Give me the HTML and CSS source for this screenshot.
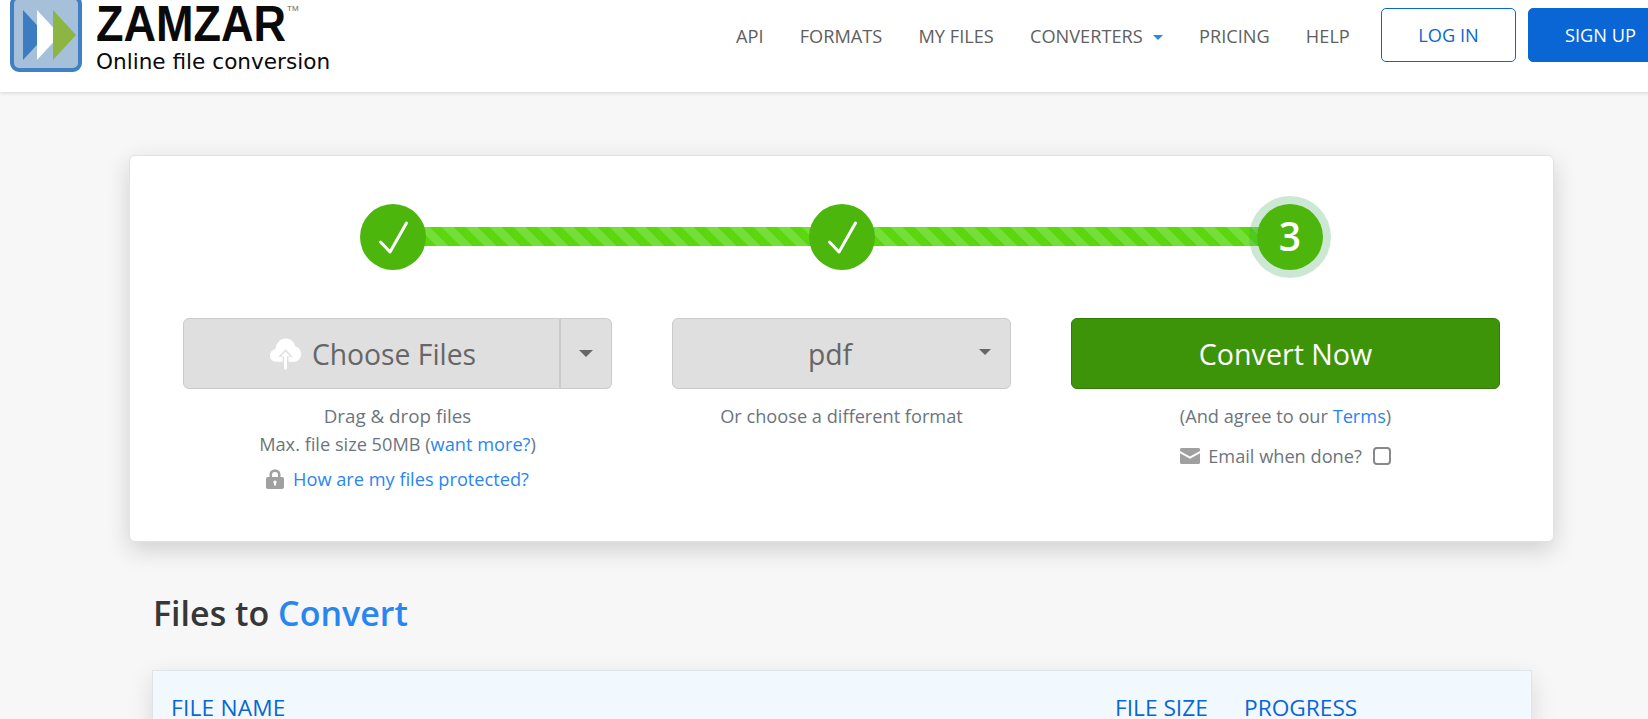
FILE: index.html
```html
<!DOCTYPE html>
<html lang="en">
<head>
<meta charset="utf-8">
<title>Zamzar</title>
<link rel="stylesheet" href="styles.css">
</head>
<body>
<header class="site-header">
  <a class="brand">
    <svg class="brand-icon" width="73" height="72" viewBox="0 0 73 72"><rect x="2" y="-3" width="68" height="73" rx="7" fill="#a6c0d9" stroke="#3f80c4" stroke-width="4"/><path d="M13 10 L36 35 L13 60 Z" fill="#3b7dc0"/><path d="M27 10 L50 35 L27 60 Z" fill="#fff"/><path d="M43 10 L66 35 L43 60 Z" fill="#8db543"/></svg>
    <span class="brand-text">
      <span class="brand-row"><span class="brand-name">ZAMZAR</span><span class="brand-tm">TM</span></span>
      <span class="brand-tag">Online file conversion</span>
    </span>
  </a>
  <nav class="nav">
    <a class="nav-link">API</a>
    <a class="nav-link">FORMATS</a>
    <a class="nav-link">MY FILES</a>
    <a class="nav-link">CONVERTERS<i class="nav-caret"></i></a>
    <a class="nav-link">PRICING</a>
    <a class="nav-link">HELP</a>
    <a class="btn-login">LOG IN</a>
    <a class="btn-signup">SIGN UP</a>
  </nav>
</header>
<main class="main">
  <section class="card">
    <div class="steps">
      <div class="step"><svg width="66" height="66" viewBox="0 0 66 66"><path d="M20.500 38 L30 48 L46.500 19" fill="none" stroke="#fff" stroke-width="3" stroke-linecap="round" stroke-linejoin="round"/></svg></div>
      <div class="track"></div>
      <div class="step"><svg width="66" height="66" viewBox="0 0 66 66"><path d="M20.500 38 L30 48 L46.500 19" fill="none" stroke="#fff" stroke-width="3" stroke-linecap="round" stroke-linejoin="round"/></svg></div>
      <div class="track"></div>
      <div class="step step-current">3</div>
    </div>
    <div class="actions">
      <div class="action">
        <div class="split">
          <button class="btn-gray btn-choose">
            <svg width="31" height="33" viewBox="0 0 32 33"><path d="M7 25 C2.500 25 0 22 0 18.500 C0 15 2.500 12.500 5.500 12.200 C6 6 10.500 1 16.500 1 C21.500 1 25 4.500 26 9 C29.500 10 32 13 32 17 C32 21.500 29 25 25 25 Z" fill="#fff"/><path d="M16 12 L8.500 20 L13 20 L13 27 L19 27 L19 20 L23.500 20 Z" fill="#dfdfdf"/><path d="M16 14.500 L11 19.500 L14.500 19.500 L14.500 32 C14.500 33.300 17.500 33.300 17.500 32 L17.500 19.500 L21 19.500 Z" fill="#fff"/></svg>
            <span>Choose Files</span>
          </button>
          <button class="btn-gray btn-more"><i class="caret"></i></button>
        </div>
        <p class="note note-drag">Drag &amp; drop files</p>
        <p class="note">Max. file size 50MB (<a class="link">want more?</a>)</p>
        <p class="note note-lock">
          <svg width="18" height="20" viewBox="0 0 18 20"><path d="M3.500 8 V5.500 C3.500 2.300 6 0.500 9 0.500 C12 0.500 14.500 2.300 14.500 5.500 V8 H12 V5.500 C12 3.800 10.700 3 9 3 C7.300 3 6 3.800 6 5.500 V8 Z" fill="#a0a0a0"/><path d="M2 8 H16 C17.200 8 18 8.800 18 10 V18 C18 19.200 17.200 20 16 20 H2 C0.800 20 0 19.200 0 18 V10 C0 8.800 0.800 8 2 8 Z M9 11.500 A1.700 1.700 0 0 0 8 14.500 V16.500 H10 V14.500 A1.700 1.700 0 0 0 9 11.500 Z" fill="#a0a0a0" fill-rule="evenodd"/></svg>
          <a class="link">How are my files protected?</a>
        </p>
      </div>
      <div class="action">
        <button class="btn-gray btn-format"><span>pdf</span><i class="caret caret-small"></i></button>
        <p class="note">Or choose a different format</p>
      </div>
      <div class="action">
        <button class="btn-convert">Convert Now</button>
        <p class="note">(And agree to our <a class="link">Terms</a>)</p>
        <p class="note note-email">
          <svg width="20" height="16" viewBox="0 0 20 16"><path d="M1.500 0 H18.500 C19.300 0 20 0.700 20 1.500 V3 L10 8.500 L0 3 V1.500 C0 0.700 0.700 0 1.500 0 Z" fill="#a0a0a0"/><path d="M0 5.200 L10 10.700 L20 5.200 V14.500 C20 15.300 19.300 16 18.500 16 H1.500 C0.700 16 0 15.300 0 14.500 Z" fill="#a0a0a0"/></svg>
          <span>Email when done?</span>
          <i class="checkbox"></i>
        </p>
      </div>
    </div>
  </section>
  <h2 class="files-title">Files to <span class="accent">Convert</span></h2>
  <section class="files-panel">
    <div class="files-head">
      <span class="col-name">FILE NAME</span>
      <span class="col-size">FILE SIZE</span>
      <span class="col-progress">PROGRESS</span>
    </div>
  </section>
</main>
</body>
</html>
```
FILE: styles.css
```css
* { box-sizing: border-box; }
html, body { margin: 0; height: 719px; overflow: hidden; }
body {
  width: 1648px;
  background: #f7f7f7;
  color: #6c757d;
  font-family: "Open Sans", "Noto Sans", sans-serif;
}
.site-header {
  width: 1663px;
  height: 92px;
  padding-left: 10px;
  display: flex;
  justify-content: space-between;
  background: #fff;
  box-shadow: 0 1px 4px rgba(0,0,0,.14);
}
.brand { display: flex; align-items: flex-start; gap: 13px; }
.brand-text { display: flex; flex-direction: column; color: #0a0a0a; }
.brand-row { display: flex; height: 49px; }
.brand-name {
  width: 190px;
  font-family: "Liberation Sans", sans-serif;
  font-size: 50px;
  font-weight: 700;
  line-height: 48px;
  transform: scaleX(.9);
  transform-origin: left top;
}
.brand-tm { font-family: "Liberation Sans", sans-serif; font-size: 8px; line-height: 18px; color: #666; margin-left: 1px; }
.brand-tag { font-family: "DejaVu Sans", sans-serif; font-size: 21.600px; line-height: 25px; }
.nav { display: flex; align-items: flex-start; padding-top: 8px; }
.nav-link {
  font-size: 18.200px;
  line-height: 56px;
  color: #606060;
  margin-right: 36.200px;
}
.nav-caret {
  display: inline-block;
  width: 0; height: 0;
  margin-left: 10px;
  vertical-align: 3px;
  border: 5px solid transparent;
  border-top-color: #2a86ef;
  border-bottom: 0;
}
.btn-login, .btn-signup {
  height: 54px;
  line-height: 53px;
  border-radius: 5px;
  font-size: 18.200px;
  text-align: center;
}
.btn-login { width: 135px; border: 1px solid #0a66d4; color: #0a66d4; background: #fff; margin-left: -5px; margin-right: 12px; }
.btn-signup { width: 135px; padding-left: 10px; border: 1px solid #0a66d4; color: #fff; background: #0a66d4; }
.main { padding: 63px 0 0 129px; width: 1554px; }
.card {
  width: 1425px;
  height: 387px;
  padding: 48px 53px 0;
  background: #fff;
  border: 1px solid #e2e2e2;
  border-radius: 6px;
  box-shadow: 0 8px 24px rgba(0,0,0,.16);
}
.steps { display: flex; align-items: center; margin: 0 177px; }
.step {
  position: relative;
  flex: none;
  width: 66px;
  height: 66px;
  border-radius: 50%;
  background: #4db60d;
  color: #fff;
  font-size: 39px;
  font-weight: 600;
  line-height: 64px;
  text-align: center;
}
.step svg { display: block; }
.step-current { box-shadow: 0 0 0 8px rgba(40,160,80,.24); }
.track {
  flex: 1;
  height: 19px;
  margin: 0 -2px 1px;
  background: repeating-linear-gradient(45deg, #5cd60f 0 8.500px, #74df39 8.500px 17px);
}
.actions { display: grid; grid-template-columns: 429px 339px 429px; gap: 60px; margin-top: 48px; }
.action { text-align: center; }
.split { display: flex; }
button { font-family: inherit; cursor: pointer; }
.btn-gray {
  height: 71px;
  background: #dfdfdf;
  border: 1px solid #cbcbcb;
  color: #666;
  font-size: 28.300px;
  display: flex;
  align-items: center;
  justify-content: center;
  padding: 0;
}
.btn-choose { flex: 1; gap: 11px; border-radius: 6px 0 0 6px; padding-left: 3px; }
.btn-more { width: 52px; border-left: 0; border-radius: 0 6px 6px 0; box-shadow: inset 1px 0 0 #cbcbcb; }
.btn-format { position: relative; width: 100%; border-radius: 6px; padding-right: 23px; }
.caret {
  display: block;
  width: 0; height: 0;
  border: 7px solid transparent;
  border-top-color: #666;
  border-bottom: 0;
}
.caret-small { position: absolute; right: 19px; top: 30px; border-width: 6px 6px 0; }
.btn-convert {
  width: 100%;
  height: 71px;
  background: #3e9409;
  border: 1px solid #307c05;
  border-radius: 6px;
  color: #fff;
  font-size: 28.600px;
  padding: 0;
}
.note { margin: 0; font-size: 18.200px; line-height: 28px; }
.note-drag { font-size: 18.800px; }
.action > .note:nth-child(2) { margin-top: 13px; }
.link { color: #2a86ef; }
.note-lock { display: flex; justify-content: center; align-items: center; gap: 9px; margin-top: 7px; }
.note-email { display: flex; justify-content: center; align-items: center; margin-top: 12px; }
.note-email svg { margin-right: 8px; }
.checkbox { width: 18px; height: 18px; margin-left: 11px; border: 2px solid #888; border-radius: 4px; background: #fff; }
.files-title { margin: 49px 0 0 24px; color: #373737; font-size: 34px; font-weight: 600; line-height: 44px; }
.accent { color: #2a86ef; }
.files-panel {
  margin: 35px 0 0 23px;
  height: 200px;
  padding-top: 21px;
  background: #f2f9fe;
  border: 1px solid #dde5ea;
  box-shadow: 0 8px 24px rgba(0,0,0,.12);
  width: 1380px;
}
.files-head { display: flex; color: #0a66d4; font-size: 22.700px; line-height: 32px; padding-left: 18px; }
.col-name { width: 944px; letter-spacing: .2px; }
.col-size { width: 129px; }
```
